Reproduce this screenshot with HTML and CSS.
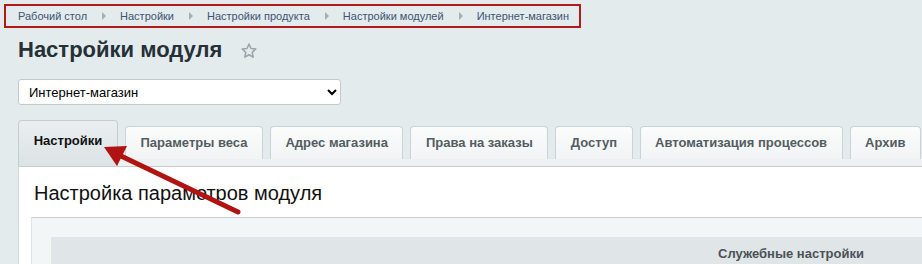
FILE: index.html
```html
<!DOCTYPE html>
<html lang="ru">
<head>
    <meta charset="UTF-8">
    <meta name="viewport" content="width=device-width, initial-scale=1.0">
    <title>Настройки модуля</title>
    <link rel="stylesheet" href="styles.css">
</head>
<body>
    <div class="page">
        <!-- Навигационная цепочка -->
        <div class="breadcrumbs">
            <a href="#">Рабочий стол</a>
            <span class="crumb-arrow"></span>
            <a href="#">Настройки</a>
            <span class="crumb-arrow"></span>
            <a href="#">Настройки продукта</a>
            <span class="crumb-arrow"></span>
            <a href="#">Настройки модулей</a>
            <span class="crumb-arrow"></span>
            <a href="#">Интернет-магазин</a>
        </div>

        <div class="title-row">
            <h1>Настройки модуля</h1>
            <svg class="star" width="18" height="18" viewBox="0 0 24 24">
                <path d="M12 2.8l2.7 5.9 6.4.7-4.8 4.4 1.3 6.4L12 17l-5.6 3.2 1.3-6.4-4.8-4.4 6.4-.7z" fill="none" stroke="#9aa3a7" stroke-width="2" stroke-linejoin="round"/>
            </svg>
        </div>

        <select class="module-select">
            <option>Интернет-магазин</option>
        </select>

        <div class="tabs">
            <div class="tab active">Настройки</div>
            <div class="tab">Параметры веса</div>
            <div class="tab">Адрес магазина</div>
            <div class="tab">Права на заказы</div>
            <div class="tab">Доступ</div>
            <div class="tab">Автоматизация процессов</div>
            <div class="tab">Архив</div>
        </div>

        <div class="panel">
            <h2>Настройка параметров модуля</h2>
            <div class="edit-box">
                <div class="edit-table">
                    <div class="edit-heading">Служебные настройки</div>
                </div>
            </div>
        </div>
    </div>

    <!-- Стрелка-указатель поверх страницы -->
    <svg class="pointer" width="922" height="264" viewBox="0 0 922 264">
        <line x1="238" y1="212" x2="121" y2="156" stroke="#b11212" stroke-width="5" stroke-linecap="round"/>
        <polygon points="104,147 127,146 117,166" fill="#b11212"/>
    </svg>
</body>
</html>
```

FILE: styles.css
```css
body {
    margin: 0;
    font-family: "Liberation Sans", Arial, sans-serif;
    background-color: #e4ebed;
    overflow: hidden;
}

.page {
    padding: 4px 0 0 18px;
}

.breadcrumbs {
    display: inline-flex;
    align-items: center;
    margin-left: -14px;
    padding: 2px 10px 2px 12px;
    border: 2px solid #b11a1c;
    font-size: 11px;
    line-height: 16px;
}

.breadcrumbs a {
    color: #3d5472;
    text-decoration: none;
}

.crumb-arrow {
    width: 0;
    height: 0;
    margin: 0 14px 0 15px;
    border-top: 4px solid transparent;
    border-bottom: 4px solid transparent;
    border-left: 4px solid #a6afb3;
}

.title-row {
    display: flex;
    align-items: center;
    margin-top: 8px;
}

h1 {
    margin: 0;
    font-size: 22px;
    line-height: 28px;
    color: #253037;
}

.star {
    margin-left: 18px;
    margin-top: 2px;
}

.module-select {
    display: block;
    width: 323px;
    height: 26px;
    margin-top: 15px;
    padding: 0 6px;
    border: 1px solid #c2cacd;
    border-radius: 3px;
    background-color: #fff;
    font-family: inherit;
    font-size: 13px;
    color: #000;
}

.tabs {
    display: flex;
    align-items: flex-end;
    gap: 7px;
    margin-top: 15px;
    background: linear-gradient(to bottom, transparent 38px, #d6dcdf 38px, #eef1f2 39px);
}

.tab {
    flex-shrink: 0;
    height: 33px;
    margin-bottom: 7px;
    padding: 0 14.5px;
    box-sizing: border-box;
    border: 1px solid #ccd3d6;
    border-bottom: none;
    border-radius: 4px 4px 0 0;
    background: linear-gradient(to bottom, #fbfcfc, #f1f4f5);
    font-size: 13px;
    font-weight: bold;
    line-height: 32px;
    color: #535d61;
    white-space: nowrap;
}

.tab.active {
    height: 46px;
    margin-bottom: 0;
    width: 100px;
    padding: 0;
    text-align: center;
    line-height: 40px;
    color: #111;
    background: linear-gradient(to bottom, #eaeef0, #dce3e5);
    border-color: #c5cdd0;
}

.panel {
    background-color: #fff;
    border-top: 1px solid #c6cdd0;
    border-left: 1px solid #d3d9db;
    padding: 0 0 0 12px;
    height: 120px;
}

h2 {
    margin: 0;
    padding: 13px 0 0 3px;
    font-size: 20px;
    font-weight: normal;
    line-height: 26px;
    color: #111;
}

.edit-box {
    margin-top: 11px;
    border-top: 1px solid #c7cfd2;
    border-left: 1px solid #dfe5e7;
    background-color: #f3f6f7;
    padding: 19px 0 0 19px;
}

.edit-table {
    width: 1480px;
    background-color: #e0e6e8;
}

.edit-heading {
    padding-top: 9px;
    text-align: center;
    font-size: 13px;
    font-weight: bold;
    color: #4a5356;
    line-height: 16px;
    height: 30px;
}

.pointer {
    position: absolute;
    left: 0;
    top: 0;
    pointer-events: none;
}
```
